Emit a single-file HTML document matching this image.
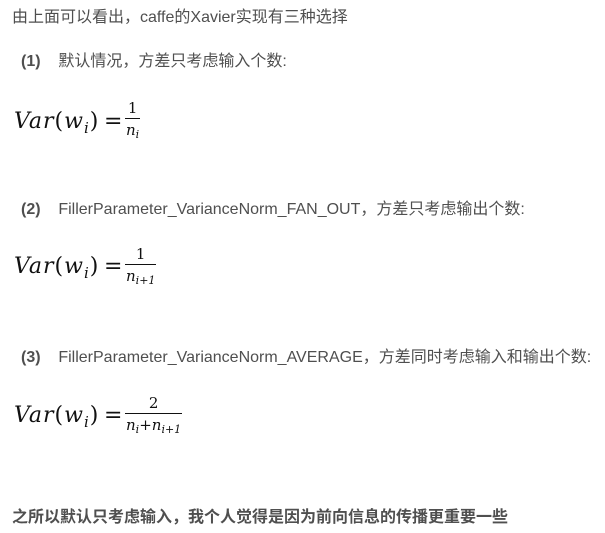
<!DOCTYPE html>
<html><head><meta charset="utf-8"><style>
body{margin:0;width:605px;height:533px;background:#fff;position:relative;overflow:hidden;font-family:"Liberation Sans","Noto Sans CJK SC",sans-serif;color:#4f4f4f;font-size:16px}
.t{position:absolute;white-space:nowrap;line-height:20px}
.f{position:absolute;font-family:"DejaVu Serif","Liberation Serif",serif;color:#111;white-space:nowrap}
.lhs{position:absolute;font-size:22px;font-style:italic;line-height:30px;letter-spacing:1px}
.lhs .u{font-style:normal}
.lhs .eq{position:absolute;left:90px;font-style:normal}
.lhs sub{font-size:15px;vertical-align:-5px}
.fr{position:absolute;text-align:center;font-size:15px}
.fr .n{display:block;line-height:19px}
.fr .d{display:block;border-top:1px solid #111;font-style:italic;line-height:22px;padding:0 1px}
.fr .d sub{font-size:11px;vertical-align:-3px}
b{color:#4f4f4f}
</style></head><body>
<div class="t" style="left:12px;top:8px">由上面可以看出，caffe的Xavier实现有三种选择</div>
<div class="t" style="left:21px;top:52px"><b>(1)</b>&nbsp;&nbsp;&nbsp;&nbsp;默认情况，方差只考虑输入个数:</div>
<div class="f" style="left:14px;top:107px"><div class="lhs">Var<span class="u">(</span>w<sub>i</sub><span class="u">)</span><span class="eq">=</span></div>
<div class="fr" style="left:111px;top:-8px"><span class="n">1</span><span class="d">n<sub>i</sub></span></div></div>
<div class="t" style="left:21px;top:200px"><b>(2)</b>&nbsp;&nbsp;&nbsp;&nbsp;FillerParameter_VarianceNorm_FAN_OUT，方差只考虑输出个数:</div>
<div class="f" style="left:14px;top:252px"><div class="lhs">Var<span class="u">(</span>w<sub>i</sub><span class="u">)</span><span class="eq">=</span></div>
<div class="fr" style="left:111px;top:-7px"><span class="n">1</span><span class="d">n<sub>i+1</sub></span></div></div>
<div class="t" style="left:21px;top:348px"><b>(3)</b>&nbsp;&nbsp;&nbsp;&nbsp;FillerParameter_VarianceNorm_AVERAGE，方差同时考虑输入和输出个数:</div>
<div class="f" style="left:14px;top:401px"><div class="lhs">Var<span class="u">(</span>w<sub>i</sub><span class="u">)</span><span class="eq">=</span></div>
<div class="fr" style="left:111px;top:-7px"><span class="n">2</span><span class="d">n<sub>i</sub>+n<sub>i+1</sub></span></div></div>
<div class="t" style="left:12px;top:508px;font-weight:bold">之所以默认只考虑输入，我个人觉得是因为前向信息的传播更重要一些</div>
</body></html>
